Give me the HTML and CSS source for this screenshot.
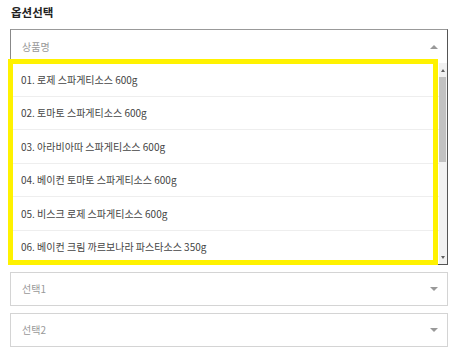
FILE: index.html
```html
<!DOCTYPE html>
<html>

<head>
    <title>옵션선택</title>
    <link rel="stylesheet" href="styles.css">
</head>

<body>
    <div class="option">
        <h2 class="option-title">옵션선택</h2>

        <div class="select open">
            <div class="select-head">
                <span class="placeholder">상품명</span>
                <span class="arrow up"></span>
            </div>
            <div class="select-body">
                <ul class="select-list">
                    <li>01. 로제 스파게티소스 600g</li>
                    <li>02. 토마토 스파게티소스 600g</li>
                    <li>03. 아라비아따 스파게티소스 600g</li>
                    <li>04. 베이컨 토마토 스파게티소스 600g</li>
                    <li>05. 비스크 로제 스파게티소스 600g</li>
                    <li>06. 베이컨 크림 까르보나라 파스타소스 350g</li>
                </ul>
                <div class="scrollbar">
                    <span class="sb-btn"><span class="sb-up"></span></span>
                    <span class="sb-track"><span class="sb-thumb"></span></span>
                    <span class="sb-btn"><span class="sb-down"></span></span>
                </div>
            </div>
        </div>

        <div class="select">
            <div class="select-head">
                <span class="placeholder">선택1</span>
                <span class="arrow"></span>
            </div>
        </div>

        <div class="select">
            <div class="select-head">
                <span class="placeholder">선택2</span>
                <span class="arrow"></span>
            </div>
        </div>

        <!-- highlight box drawn over the open list -->
        <div class="highlight"></div>
    </div>
</body>

</html>
```

FILE: styles.css
```css
body {
    margin: 0;
    background: #fff;
    font-family: "Noto Sans CJK KR", "Noto Sans", sans-serif;
    color: #444;
}

.option {
    position: relative;
    padding: 0 10px;
}

.option-title {
    margin: 0;
    padding-top: 4px;
    height: 25px;
    font-size: 11.5px;
    line-height: 16px;
    font-weight: bold;
    color: #222;
    padding-left: 1px;
}

.select {
    border: 1px solid #d4d4d4;
    background: #fff;
    margin-bottom: 7px;
}

.select.open {
    border-color: #999 #555 #555 #888;
}

.select-head {
    height: 32px;
    display: flex;
    align-items: center;
    justify-content: space-between;
    padding: 0 9px 0 11px;
}

.select.open .select-head {
    height: 33px;
}

.placeholder {
    font-size: 10px;
    color: #999;
    line-height: 14px;
}

.arrow {
    width: 0;
    height: 0;
    border-left: 4px solid transparent;
    border-right: 4px solid transparent;
    border-top: 4px solid #999;
}

.arrow.up {
    border-top: none;
    border-bottom: 4px solid #999;
}

.select-body {
    display: flex;
    height: 201px;
}

.select-list {
    flex: 1;
    margin: 0;
    padding: 0;
    list-style: none;
}

.select-list li {
    height: 32.5px;
    border-bottom: 1px solid #eee;
    display: flex;
    align-items: center;
    padding-left: 10px;
    font-size: 10px;
    color: #444;
}

.select-list li:last-child {
    border-bottom: none;
}

.scrollbar {
    width: 8px;
    display: flex;
    flex-direction: column;
    background: #f1f1f1;
}

.sb-btn {
    height: 14px;
    display: flex;
    align-items: center;
    justify-content: center;
}

.sb-up,
.sb-down {
    width: 0;
    height: 0;
    border-left: 2.5px solid transparent;
    border-right: 2.5px solid transparent;
}

.sb-up {
    border-bottom: 3px solid #606060;
}

.sb-down {
    border-top: 3px solid #606060;
}

.sb-track {
    flex: 1;
}

.sb-thumb {
    display: block;
    width: 7px;
    height: 85px;
    background: #c1c1c1;
}

.highlight {
    position: absolute;
    left: 8px;
    top: 59px;
    width: 420px;
    height: 196px;
    border: 5px solid #fff200;
}
```
